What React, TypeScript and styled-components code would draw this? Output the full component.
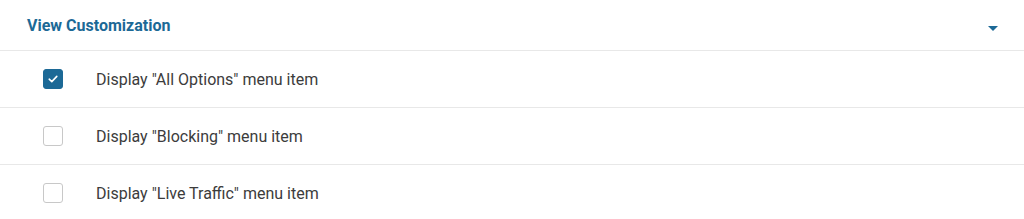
import React, { useState } from 'react';
import styled, { createGlobalStyle } from 'styled-components';

const GlobalStyle = createGlobalStyle`
  body {
    margin: 0;
    background: #ffffff;
    font-family: Roboto, 'Liberation Sans', sans-serif;
  }
`;

const Panel = styled.div`
  width: 1024px;
  background: #ffffff;
`;

const Header = styled.div`
  display: flex;
  align-items: center;
  justify-content: space-between;
  height: 50px;
  padding: 0 26px 0 27px;
  border-bottom: 1px solid #e8e8e8;
  box-sizing: content-box;
  cursor: pointer;
`;

const Title = styled.div`
  font-size: 16px;
  font-weight: 700;
  color: #1c6996;
`;

const Caret = styled.div`
  width: 0;
  height: 0;
  margin-top: 6px;
  border-left: 5px solid transparent;
  border-right: 5px solid transparent;
  border-top: 5px solid #1c6996;
`;

const Row = styled.label<{ $last?: boolean }>`
  display: flex;
  align-items: center;
  gap: 33px;
  height: 56px;
  padding-left: 43px;
  border-bottom: ${(p) => (p.$last ? 'none' : '1px solid #e8e8e8')};
  cursor: pointer;
`;

const Box = styled.span<{ $checked: boolean }>`
  display: flex;
  align-items: center;
  justify-content: center;
  width: 18px;
  height: 18px;
  border-radius: 3px;
  border: 1px solid ${(p) => (p.$checked ? '#1c6996' : '#c8c8c8')};
  background: ${(p) => (p.$checked ? '#1c6996' : '#ffffff')};
`;

const Label = styled.span`
  font-size: 16px;
  color: #3c3c3c;
`;

const items = [
  'Display "All Options" menu item',
  'Display "Blocking" menu item',
  'Display "Live Traffic" menu item',
];

export default function App() {
  const [checked, setChecked] = useState([true, false, false]);
  const toggle = (i: number) =>
    setChecked(checked.map((c, j) => (j === i ? !c : c)));

  return (
    <Panel>
      <GlobalStyle />
      <Header>
        <Title>View Customization</Title>
        <Caret />
      </Header>
      {items.map((text, i) => (
        <Row key={text} $last={i === items.length - 1} onClick={() => toggle(i)}>
          <Box $checked={checked[i]}>
            {checked[i] && (
              <svg width="10" height="8" viewBox="0 0 10 8">
                <path d="M1.2 4.2 L3.8 6.6 L8.8 1.4" fill="none" stroke="#ffffff" strokeWidth="1.6" strokeLinecap="round" strokeLinejoin="round" />
              </svg>
            )}
          </Box>
          <Label>{text}</Label>
        </Row>
      ))}
    </Panel>
  );
}
